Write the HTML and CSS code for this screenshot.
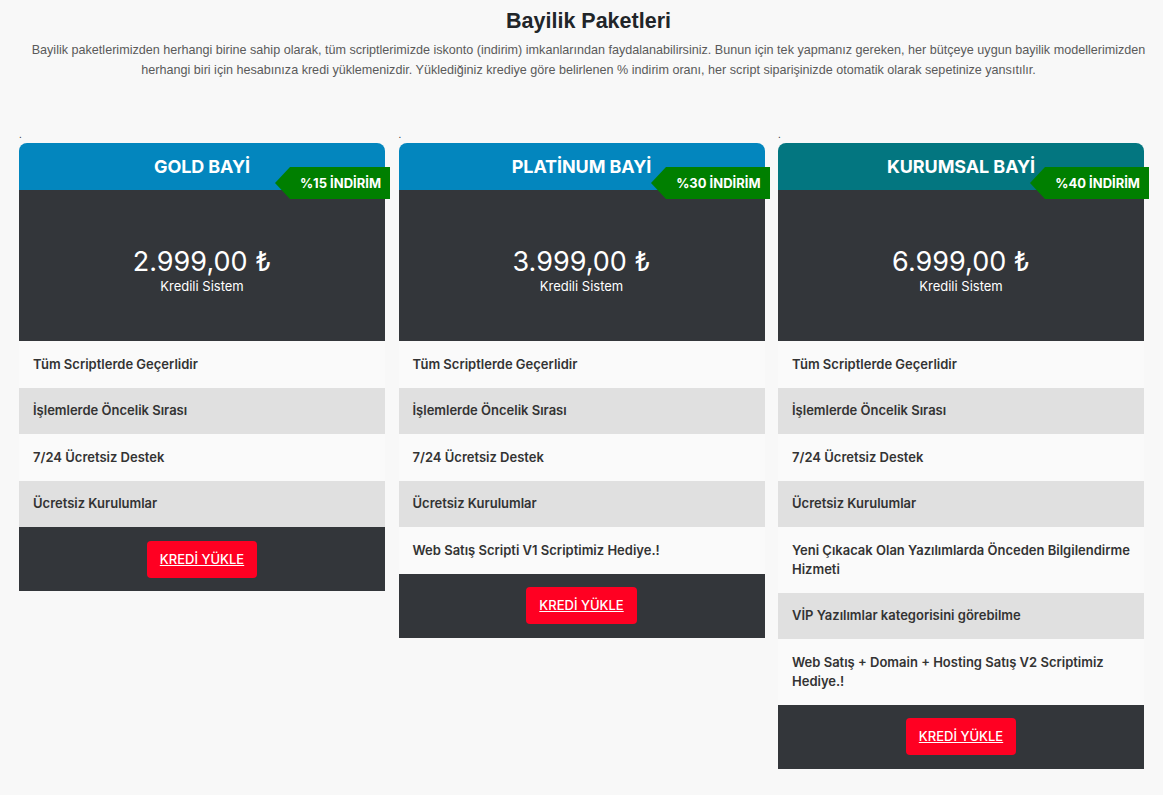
FILE: index.html
```html
<!DOCTYPE html>
<html lang="tr">
<head>
<meta charset="utf-8">
<title>Bayilik Paketleri</title>
<link rel="stylesheet" href="styles.css">
</head>
<body>
<section class="dealers">
  <header class="intro">
    <h1 class="intro-title">Bayilik Paketleri</h1>
    <p class="intro-text">Bayilik paketlerimizden herhangi birine sahip olarak, tüm scriptlerimizde iskonto (indirim) imkanlarından faydalanabilirsiniz. Bunun için tek yapmanız gereken, her bütçeye uygun bayilik modellerimizden herhangi biri için hesabınıza kredi yüklemenizdir. Yüklediğiniz krediye göre belirlenen % indirim oranı, her script siparişinizde otomatik olarak sepetinize yansıtılır.</p>
  </header>

  <div class="plans">
    <div class="plan-col">
      <span class="dot">.</span>
      <article class="plan">
        <div class="plan-head blue">
          <h2 class="plan-name">GOLD BAYİ</h2>
          <span class="ribbon">%15 İNDİRİM</span>
        </div>
        <div class="plan-price">
          <div class="amount">2.999,00 ₺</div>
          <div class="amount-note">Kredili Sistem</div>
        </div>
        <ul class="features">
          <li>Tüm Scriptlerde Geçerlidir</li>
          <li>İşlemlerde Öncelik Sırası</li>
          <li>7/24 Ücretsiz Destek</li>
          <li>Ücretsiz Kurulumlar</li>
        </ul>
        <div class="plan-foot"><a class="btn-load" href="#">KREDİ YÜKLE</a></div>
      </article>
    </div>

    <div class="plan-col">
      <span class="dot">.</span>
      <article class="plan">
        <div class="plan-head blue">
          <h2 class="plan-name">PLATİNUM BAYİ</h2>
          <span class="ribbon">%30 İNDİRİM</span>
        </div>
        <div class="plan-price">
          <div class="amount">3.999,00 ₺</div>
          <div class="amount-note">Kredili Sistem</div>
        </div>
        <ul class="features">
          <li>Tüm Scriptlerde Geçerlidir</li>
          <li>İşlemlerde Öncelik Sırası</li>
          <li>7/24 Ücretsiz Destek</li>
          <li>Ücretsiz Kurulumlar</li>
          <li>Web Satış Scripti V1 Scriptimiz Hediye.!</li>
        </ul>
        <div class="plan-foot"><a class="btn-load" href="#">KREDİ YÜKLE</a></div>
      </article>
    </div>

    <div class="plan-col">
      <span class="dot">.</span>
      <article class="plan">
        <div class="plan-head teal">
          <h2 class="plan-name">KURUMSAL BAYİ</h2>
          <span class="ribbon">%40 İNDİRİM</span>
        </div>
        <div class="plan-price">
          <div class="amount">6.999,00 ₺</div>
          <div class="amount-note">Kredili Sistem</div>
        </div>
        <ul class="features">
          <li>Tüm Scriptlerde Geçerlidir</li>
          <li>İşlemlerde Öncelik Sırası</li>
          <li>7/24 Ücretsiz Destek</li>
          <li>Ücretsiz Kurulumlar</li>
          <li>Yeni Çıkacak Olan Yazılımlarda Önceden Bilgilendirme Hizmeti</li>
          <li>VİP Yazılımlar kategorisini görebilme</li>
          <li>Web Satış + Domain + Hosting Satış V2 Scriptimiz Hediye.!</li>
        </ul>
        <div class="plan-foot"><a class="btn-load" href="#">KREDİ YÜKLE</a></div>
      </article>
    </div>
  </div>
</section>
</body>
</html>
```

FILE: styles.css
```css
* { box-sizing: border-box; }

html, body {
  margin: 0;
  padding: 0;
  background: #f8f8f8;
}

body {
  font-family: "Liberation Sans", Arial, sans-serif;
  color: #212529;
}

.dealers {
  padding: 6px 0 24px;
}

.intro {
  text-align: center;
  padding: 0 15px 0 29px;
}

.intro-title {
  margin: 0;
  font-size: 21.5px;
  line-height: 30px;
  font-weight: bold;
  color: #212529;
}

.intro-text {
  margin: 4px auto 0;
  max-width: 1118px;
  font-size: 12.6px;
  line-height: 20px;
  color: #5a5a5a;
}

.plans {
  display: flex;
  align-items: flex-start;
  gap: 13.5px;
  padding: 0 19px;
  margin-top: 47px;
}

.plan-col {
  flex: 1 1 0;
  min-width: 0;
  display: flex;
  flex-direction: column;
}

.dot {
  font-family: "Liberation Sans", Arial, sans-serif;
  font-size: 10px;
  line-height: 16px;
  height: 16px;
  color: #333;
}

.plan {
  font-family: Inter, "Noto Sans", sans-serif;
}

.plan-head {
  position: relative;
  height: 47px;
  border-radius: 8px 8px 0 0;
  display: flex;
  align-items: center;
  justify-content: center;
}

.plan-head.blue { background: #0386be; }
.plan-head.teal { background: #037680; }

.plan-name {
  margin: 0;
  font-size: 18px;
  font-weight: 700;
  color: #fff;
  letter-spacing: -0.1px;
}

/* discount ribbon with arrow tip, sticking out past the card edge */
.ribbon {
  position: absolute;
  right: -5px;
  top: 24px;
  height: 32px;
  padding: 0 9px 0 10px;
  background: #007f00;
  color: #fff;
  font-size: 13px;
  font-weight: 700;
  line-height: 32px;
  white-space: nowrap;
  z-index: 2;
}

.ribbon::before {
  content: "";
  position: absolute;
  left: -15px;
  top: 0;
  border-top: 16px solid transparent;
  border-bottom: 16px solid transparent;
  border-right: 15px solid #007f00;
}

.plan-price {
  height: 151px;
  background: #33363a;
  color: #fff;
  display: flex;
  flex-direction: column;
  align-items: center;
  justify-content: center;
  padding-top: 8px;
}

.amount {
  font-size: 27px;
  line-height: 32px;
  font-weight: 400;
}

.amount-note {
  font-size: 13px;
  line-height: 16px;
}

.features {
  list-style: none;
  margin: 0;
  padding: 0;
}

.features li {
  padding: 13.75px 14px;
  font-size: 13px;
  line-height: 19px;
  font-weight: 600;
  color: #333;
  background: #fafafa;
}

.features li:nth-child(even) {
  background: #e0e0e0;
}

.plan-foot {
  background: #33363a;
  height: 64px;
  display: flex;
  align-items: center;
  justify-content: center;
}

.btn-load {
  display: inline-block;
  background: #ff0022;
  color: #fff;
  font-size: 13px;
  font-weight: 500;
  line-height: 37px;
  height: 37px;
  padding: 0 13px;
  border-radius: 4px;
  text-decoration: underline;
}
```
